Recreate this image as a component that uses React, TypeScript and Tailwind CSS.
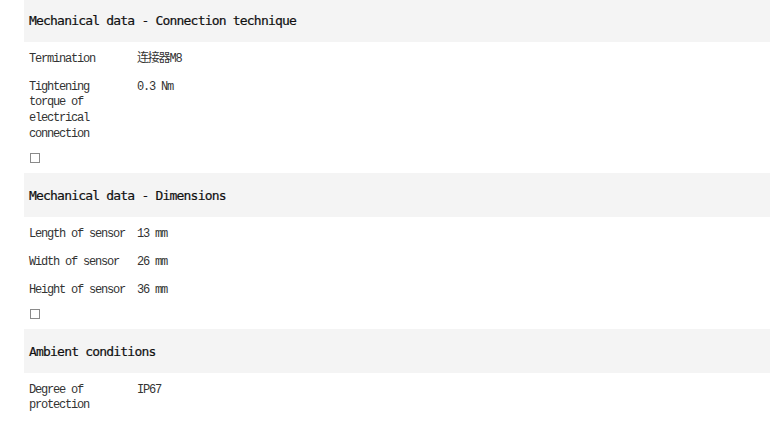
import React from 'react';

interface Row {
  label: string;
  value: string;
}

interface Section {
  title: string;
  rows: Row[];
}

const sections: Section[] = [
  {
    title: 'Mechanical data - Connection technique',
    rows: [
      { label: 'Termination', value: '连接器M8' },
      { label: 'Tightening torque of electrical connection', value: '0.3 Nm' },
    ],
  },
  {
    title: 'Mechanical data - Dimensions',
    rows: [
      { label: 'Length of sensor', value: '13 mm' },
      { label: 'Width of sensor', value: '26 mm' },
      { label: 'Height of sensor', value: '36 mm' },
    ],
  },
  {
    title: 'Ambient conditions',
    rows: [{ label: 'Degree of protection', value: 'IP67' }],
  },
];

const bodyFont = {
  fontFamily: '"Liberation Mono", "Noto Sans CJK SC", monospace',
};

export default function App() {
  return (
    <div className="min-h-[421px] bg-white pl-[24px] -mt-[2px] overflow-hidden">
      {sections.map((section, i) => (
        <div key={section.title}>
          <div className="h-[44px] bg-[#f4f4f4] flex items-center pl-[5px] pt-[2px]">
            <h2
              className="text-[13px] tracking-[-0.8px] text-[#111] font-normal"
              style={{ fontFamily: '"DejaVu Sans Mono", monospace', WebkitTextStroke: '0.2px #111' }}
            >
              {section.title}
            </h2>
          </div>

          <table className="border-collapse" style={bodyFont}>
            <tbody>
              {section.rows.map((row) => (
                <tr key={row.label} className="align-top">
                  <td className="w-[113px] pl-[5px] pr-[10px] pt-[9.5px] pb-[2.83px] text-[12px] leading-[15.67px] tracking-[-1.2px] text-[#333]">
                    {row.label}
                  </td>
                  <td className="pt-[9.5px] pb-[2.83px] text-[12px] leading-[15.67px] tracking-[-1.2px] text-[#333]">
                    {row.value}
                  </td>
                </tr>
              ))}
            </tbody>
          </table>

          {i < sections.length - 1 && (
            <div className="h-[28px] pt-[8px] pl-[6px]">
              <span className="block w-[10px] h-[10px] border border-[#8a8a8a]" />
            </div>
          )}
        </div>
      ))}
    </div>
  );
}
